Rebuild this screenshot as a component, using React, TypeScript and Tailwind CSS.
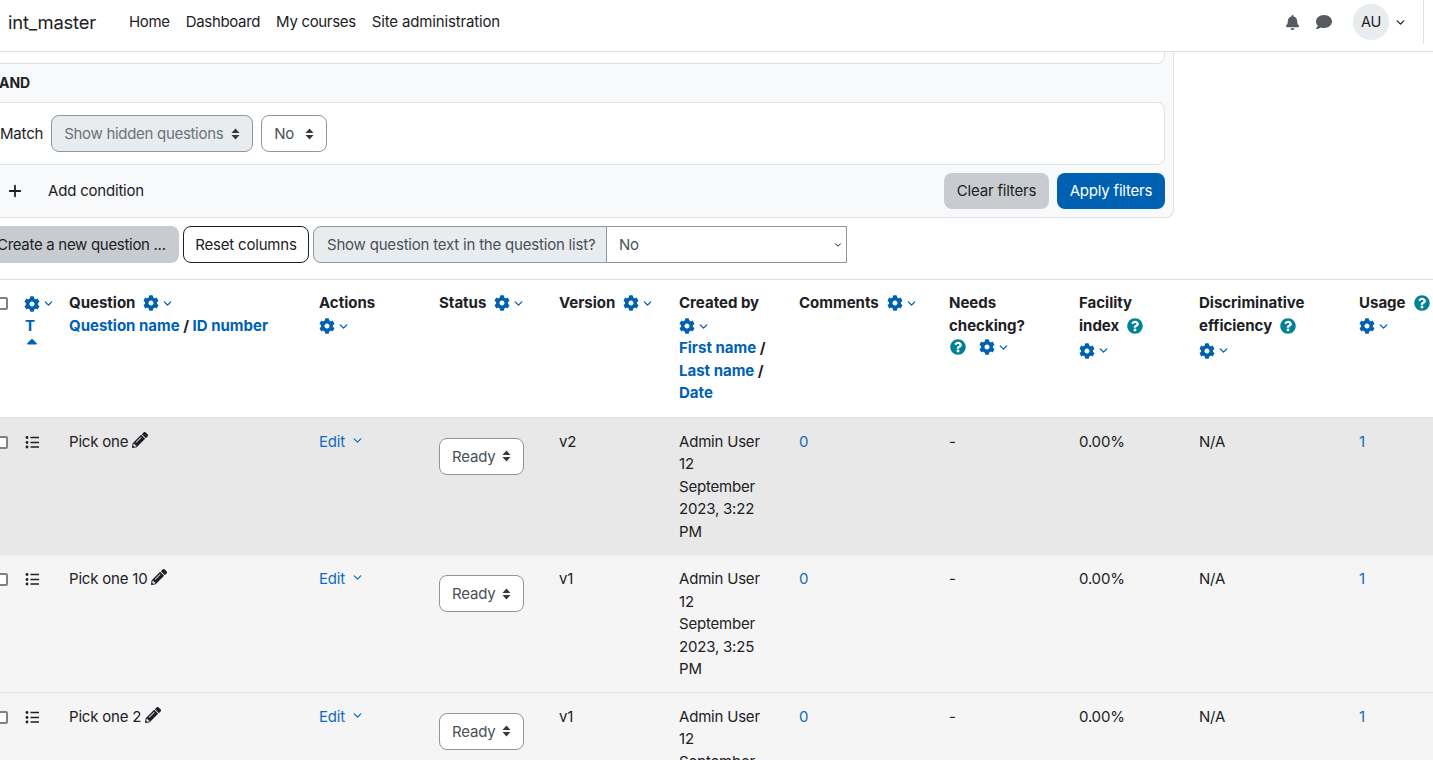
import { ChevronDown, Plus } from "lucide-react";
import { FaBell, FaCog, FaComment, FaPencilAlt, FaQuestionCircle } from "react-icons/fa";

const gridCols =
  "grid grid-cols-[29px_45px_250px_120px_120px_120px_120px_150px_130px_120px_160px_120px]";

const Caret = () => (
  <svg width="9" height="14" viewBox="0 0 9 14" className="shrink-0 text-[#343a40]" fill="currentColor">
    <path d="M4.5 1.5 8.5 6H.5z" />
    <path d="M4.5 12.5.5 8h8z" />
  </svg>
);

const DragHandle = () => (
  <svg width="14" height="14" viewBox="0 0 14 14" className="text-[#1d2125]">
    <circle cx="2" cy="2.5" r="1.4" fill="currentColor" />
    <circle cx="2" cy="7.5" r="1.4" fill="currentColor" />
    <circle cx="2" cy="12" r="1.4" fill="currentColor" />
    <path d="M5.5 2.5H14M5.5 7.5H14M5.5 12H14" stroke="currentColor" strokeWidth="1.3" />
  </svg>
);

const SortUp = () => (
  <svg width="12" height="7" viewBox="0 0 12 7" className="ml-[2px] mt-[1px]" fill="currentColor">
    <path d="M5.3 1.2a1 1 0 0 1 1.4 0l4 4.1c.5.5.2 1.2-.5 1.2H1.8c-.7 0-1-.7-.5-1.2z" />
  </svg>
);

const Gear = () => (
  <span className="inline-flex items-center gap-[2px] text-[#0061b3] align-middle">
    <FaCog className="w-4 h-4" />
    <ChevronDown className="w-[13px] h-[13px]" strokeWidth={2.4} />
  </span>
);

const Help = () => <FaQuestionCircle className="inline w-4 h-4 text-[#008196] align-middle" />;

const Checkbox = () => (
  <div className="w-[13px] h-[13px] border-2 border-[#7d8288] rounded-[2px] bg-white mt-[5px]" />
);

const SelectBox = ({ label, w, disabled }: { label: string; w: string; disabled?: boolean }) => (
  <div
    className={`${w} h-[37px] flex items-center justify-between pl-3 pr-[12px] rounded-lg border border-[#8f959e] ${
      disabled ? "bg-[#e9ecef] text-[#6a737b] tracking-[-0.3px]" : "bg-white text-[#495057]"
    }`}
  >
    <span className="pt-[2px]">{label}</span>
    <Caret />
  </div>
);

const rows = [
  { name: "Pick one", version: "v2", time: "3:22", bg: "bg-[#e8e8e8]" },
  { name: "Pick one 10", version: "v1", time: "3:25", bg: "bg-[#f5f5f5]" },
  { name: "Pick one 2", version: "v1", time: "3:25", bg: "bg-[#f5f5f5]" },
];

const QuestionRow = ({ name, version, time, bg }: (typeof rows)[number]) => (
  <div className={`${gridCols} ${bg} border-b border-[#dee2e6] pt-[13px] pb-[11px] text-[#1d2125]`}>
    <div className="pl-3">
      <Checkbox />
    </div>
    <div className="pt-[4px] pl-[13px]">
      <DragHandle />
    </div>
    <div className="pl-3 flex items-start gap-[4px]">
      <span>{name}</span>
      <FaPencilAlt className="w-4 h-4 mt-[1px] text-[#1d2125]" />
    </div>
    <div className="pl-3 text-[#0f6cbf] flex items-start gap-[6px]">
      <span>Edit</span>
      <ChevronDown className="w-[13px] h-[13px] mt-[3px]" strokeWidth={2.4} />
    </div>
    <div className="pl-3 pt-[7px]">
      <SelectBox label="Ready" w="w-[85px]" />
    </div>
    <div className="pl-3">{version}</div>
    <div className="pl-3">
      Admin User
      <br />
      12
      <br />
      September
      <br />
      2023, {time}
      <br />
      PM
    </div>
    <div className="pl-3 text-[#0f6cbf]">0</div>
    <div className="pl-3">-</div>
    <div className="pl-3">0.00%</div>
    <div className="pl-3">N/A</div>
    <div className="pl-3 text-[#0f6cbf]">1</div>
  </div>
);

export default function App() {
  return (
    <div className="h-[760px] w-[1433px] overflow-hidden bg-white text-[15px] leading-[22.5px] tracking-[-0.2px] text-[#1d2125] font-['Inter',sans-serif]">
      <header className="h-[52px] border-b border-[#dee2e6] flex items-center pl-2 pr-[26px] pb-[7px] relative">
        <span className="text-[18.4px] mr-[33px]">int_master</span>
        <nav className="flex gap-4 tracking-[-0.33px]">
          <span>Home</span>
          <span>Dashboard</span>
          <span>My courses</span>
          <span className="tracking-[-0.15px]">Site administration</span>
        </nav>
        <div className="ml-auto flex items-center text-[#555b61]">
          <FaBell className="w-[15px] h-[15px]" />
          <FaComment className="w-4 h-4 ml-[16px]" />
          <div className="ml-[21px] w-9 h-9 rounded-full bg-[#e9ecef] flex items-center justify-center text-[#1d2125] text-[14.5px]">
            AU
          </div>
          <ChevronDown className="w-[13px] h-[13px] ml-[5px] text-[#1d2125]" strokeWidth={2.4} />
        </div>
        <div className="absolute right-[9px] top-0 h-[44px] w-px bg-[#dee2e6]" />
      </header>

      <section className="-ml-[30px] w-[1204px] h-[166px] bg-[#f8f9fa] border-r border-b border-[#dee2e6] rounded-br-lg pr-[8px] pl-2">
        <div className="h-3 bg-white border-r border-b border-[#dee2e6] rounded-br-lg" />
        <div className="h-[38px] flex items-center pl-[21px] font-bold text-[14px] tracking-normal">AND</div>
        <div className="h-[63px] bg-white border border-[#dee2e6] rounded-lg flex items-center gap-2 pl-[21px]">
          <span className="pt-[2px]">Match</span>
          <SelectBox label="Show hidden questions" w="w-[202px]" disabled />
          <SelectBox label="No" w="w-[66px]" />
        </div>
        <div className="h-[52px] flex items-center pl-[29px]">
          <Plus className="w-[18px] h-[18px] -ml-[1px]" strokeWidth={2.4} />
          <span className="ml-[24px] pt-[1px]">Add condition</span>
          <div className="ml-auto flex gap-2">
            <button className="h-[36px] w-[105px] pt-[1px] rounded-lg bg-[#c8ccd1] text-[#1d2125]">Clear filters</button>
            <button className="h-[36px] w-[108px] pt-[1px] rounded-lg bg-[#0061b3] text-white">Apply filters</button>
          </div>
        </div>
      </section>

      <div className="-ml-[15px] mt-2 flex gap-[4px] w-[862px]">
        <button className="h-[37px] pl-3 pt-[2px] w-[194px] rounded-lg bg-[#c8ccd1] text-left whitespace-nowrap tracking-[-0.3px]">
          Create a new question ...
        </button>
        <button className="h-[37px] w-[126px] pt-[2px] rounded-lg border border-[#1d2125] bg-white">Reset columns</button>
        <div className="flex h-[37px]">
          <span className="w-[294px] pl-[13px] pt-[2px] flex items-center rounded-l-lg border border-[#8f959e] bg-[#e9ecef] text-[#495057]">
            Show question text in the question list?
          </span>
          <div className="w-[240px] flex items-center justify-between pl-3 pr-[3px] border border-l-0 border-[#8f959e] bg-white text-[#495057]">
            <span className="pt-[2px]">No</span>
            <ChevronDown className="w-[10px] h-[10px] mt-[1px] text-[#1d2125]" strokeWidth={2.4} />
          </div>
        </div>
      </div>

      <div className="-ml-[17px] mt-4 w-[1470px] border-t border-[#dee2e6]">
        <div className={`${gridCols} py-3 font-bold tracking-normal border-b border-[#dee2e6]`}>
          <div className="pl-3">
            <Checkbox />
          </div>
          <div className="pl-3 text-[#0061b3]">
            <Gear />
            <div className="pl-[1px]">T</div>
            <SortUp />
          </div>
          <div className="pl-3">
            <div className="flex items-center gap-2">
              Question <Gear />
            </div>
            <div>
              <span className="text-[#0061b3]">Question name</span> / <span className="text-[#0061b3]">ID number</span>
            </div>
          </div>
          <div className="pl-3">
            Actions
            <div>
              <Gear />
            </div>
          </div>
          <div className="pl-3">
            <div className="flex items-center gap-2">
              Status <Gear />
            </div>
          </div>
          <div className="pl-3">
            <div className="flex items-center gap-2">
              Version <Gear />
            </div>
          </div>
          <div className="pl-3">
            Created by
            <div>
              <Gear />
            </div>
            <div>
              <span className="text-[#0061b3]">First name</span> /
            </div>
            <div>
              <span className="text-[#0061b3]">Last name</span> /
            </div>
            <div className="text-[#0061b3]">Date</div>
          </div>
          <div className="pl-3">
            <div className="flex items-center gap-2">
              Comments <Gear />
            </div>
          </div>
          <div className="pl-3">
            Needs
            <br />
            checking?
            <div className="flex items-center gap-[13px] mt-[2px] pl-[1px]">
              <Help />
              <Gear />
            </div>
          </div>
          <div className="pl-3">
            Facility
            <div className="flex items-center gap-2">
              index <Help />
            </div>
            <div className="mt-[2px]">
              <Gear />
            </div>
          </div>
          <div className="pl-3">
            Discriminative
            <div className="flex items-center gap-2">
              efficiency <Help />
            </div>
            <div className="mt-[2px]">
              <Gear />
            </div>
          </div>
          <div className="pl-3">
            <div className="flex items-center gap-2">
              Usage <Help />
            </div>
            <Gear />
          </div>
        </div>
        {rows.map((row) => (
          <QuestionRow key={row.name} {...row} />
        ))}
      </div>
    </div>
  );
}
